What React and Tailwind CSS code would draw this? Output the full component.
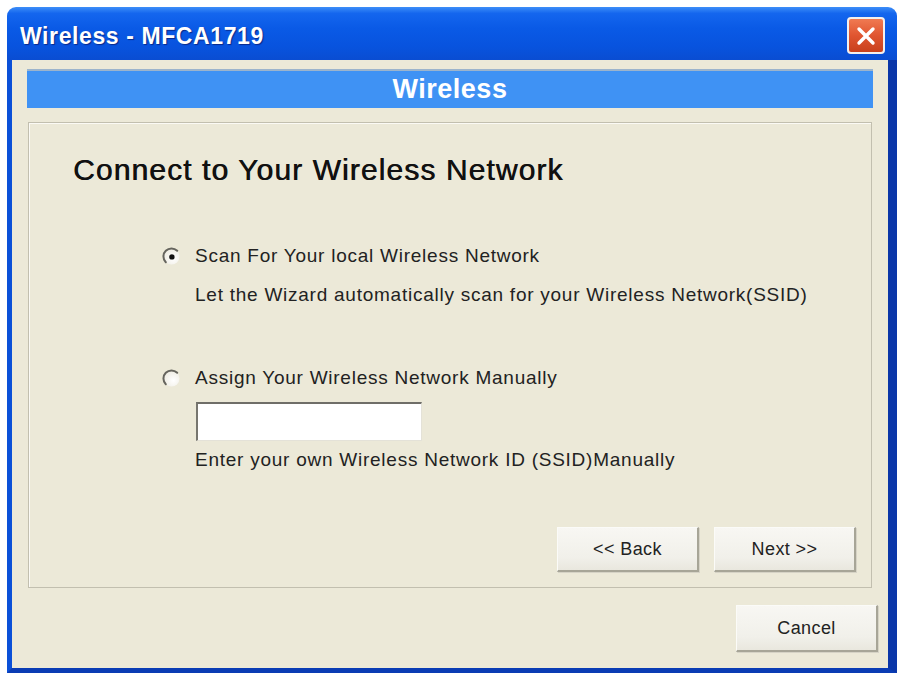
import React from "react";

function Radio({ checked }) {
  const id = checked ? "rg1" : "rg2";
  return (
    <svg width="19" height="19" viewBox="0 0 19 19" className="shrink-0">
      <defs>
        <radialGradient id={id} cx="0.62" cy="0.62" r="0.6">
          <stop offset="0" stopColor="#ffffff" />
          <stop offset="1" stopColor="#efede4" />
        </radialGradient>
      </defs>
      <circle cx="9.5" cy="9.5" r="8" fill={`url(#${id})`} />
      <path d="M15.2 3.8 A8 8 0 0 0 3.8 15.2" fill="none" stroke="#66655e" strokeWidth="2" strokeLinecap="round" />
      {checked && <circle cx="9.9" cy="9.9" r="2.7" fill="#111" />}
    </svg>
  );
}

function XpButton({ children, className = "" }) {
  return (
    <button
      className={`h-[45px] w-[142px] bg-[linear-gradient(180deg,#f8f7f3_0%,#f1f0ea_70%,#e9e7de_100%)] border-t border-l border-[#fbfbf8] border-r-2 border-b-2 border-r-[#a7a597] border-b-[#a7a597] shadow-[1px_1px_0_#d6d3c6] text-[18px] tracking-[0.4px] text-[#222] ${className}`}
    >
      {children}
    </button>
  );
}

export default function App() {
  return (
    <div
      className="w-[898px] h-[676px] bg-white pt-[7px] pl-[7px]"
      style={{ fontFamily: '"Liberation Sans", Arial, sans-serif' }}
    >
      <div className="w-[890px] h-[666px] flex flex-col rounded-t-[9px] overflow-hidden">
        {/* Title bar */}
        <div className="h-[53px] shrink-0 flex items-center justify-between pl-[13px] pr-[12px] bg-[linear-gradient(180deg,#3d8ef8_0%,#1466ee_12%,#0a5ae6_40%,#0853de_75%,#0a4dd2_100%)]">
          <span className="mt-[6px] text-white text-[23px] font-bold tracking-[0.6px] [text-shadow:1px_1px_1px_#0a2a8a]">
            Wireless - MFCA1719
          </span>
          <div className="w-[38px] h-[37px] mt-[4px] rounded-[4px] border-2 border-[#f4f0ee] bg-[linear-gradient(180deg,#f07a52_0%,#e05530_50%,#c8401c_100%)] flex items-center justify-center">
            <svg width="22" height="22" viewBox="0 0 22 22">
              <path d="M4 4 L18 18 M18 4 L4 18" stroke="#fff" strokeWidth="3.4" strokeLinecap="round" />
            </svg>
          </div>
        </div>

        {/* Client area */}
        <div className="flex-1 flex flex-col bg-[#ece9d8] border-l-[5px] border-l-[#0b50d8] border-r-[9px] border-r-[#0a36a8] border-b-[5px] border-b-[#0a3cb4]">
          <div className="mt-[9px] ml-[15px] mr-[15px] h-[39px] bg-[#3f92f4] border-t-2 border-t-[#9cb4cc] flex items-center justify-center">
            <span className="text-white text-[27px] font-bold tracking-[0.5px]">Wireless</span>
          </div>

          <div className="mt-[14px] ml-[16px] mr-[16px] h-[466px] border border-[#c2bfaf] shadow-[inset_1px_1px_0_#fbfaf5] flex flex-col">
            <h1 className="pl-[44px] pt-[30px] text-[30px] leading-[34px] tracking-[1.1px] text-[#111] [text-shadow:0.6px_0_0_#111]">
              Connect to Your Wireless Network
            </h1>

            <div className="pl-[133px] pt-[58px] text-[19px] leading-[22px] tracking-[0.75px] text-[#222]">
              <div className="flex items-center gap-[14px]">
                <Radio checked />
                <span>Scan For Your local Wireless Network</span>
              </div>
              <div className="pl-[33px] mt-[17px]">
                Let the Wizard automatically scan for your Wireless Network(SSID)
              </div>

              <div className="flex items-center gap-[14px] mt-[61px]">
                <Radio />
                <span>Assign Your Wireless Network Manually</span>
              </div>
              <div className="ml-[34px] mt-[13px] w-[226px] h-[39px] bg-white border-t-2 border-l-2 border-t-[#6f6e68] border-l-[#77766f] border-r border-b border-r-[#e4e2d8] border-b-[#e4e2d8]" />
              <div className="pl-[33px] mt-[8px]">
                Enter your own Wireless Network ID (SSID)Manually
              </div>
            </div>

            <div className="mt-auto mb-[15px] mr-[15px] flex justify-end gap-[15px]">
              <XpButton>&lt;&lt; Back</XpButton>
              <XpButton>Next &gt;&gt;</XpButton>
            </div>
          </div>

          <div className="mt-[17px] mr-[10px] flex justify-end">
            <XpButton className="h-[47px]">Cancel</XpButton>
          </div>
        </div>
      </div>
    </div>
  );
}
